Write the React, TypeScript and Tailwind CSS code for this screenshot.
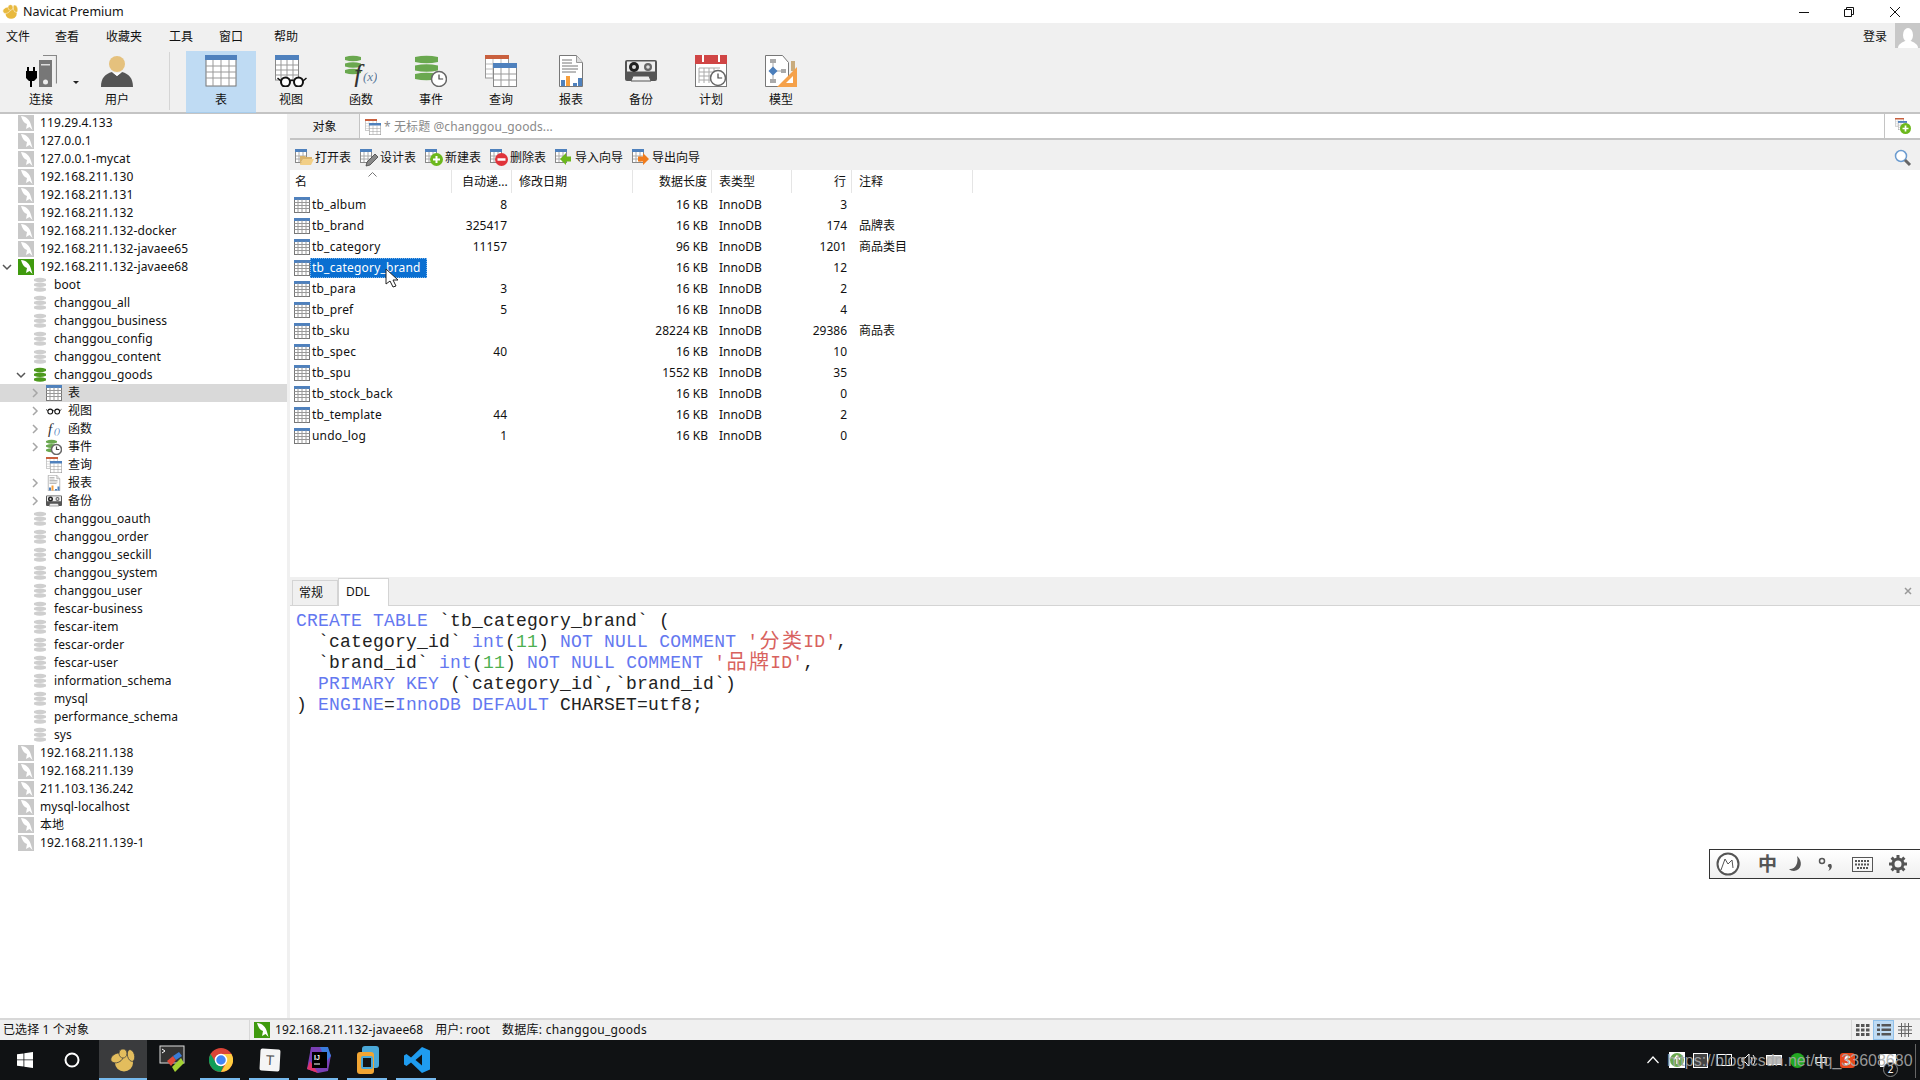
import React from "react";

const keyword = "text-[#6478f0]";
const str = "text-[#d8625e]";
const num = "text-[#4caf50]";

function GridIcon({ size = 16 }: { size?: number }) {
  const big = size > 20;
  return (
    <svg width={size} height={size} viewBox="0 0 32 32" className="shrink-0">
      <rect x="1" y="1" width="30" height="30" fill="#fff" stroke="#777" strokeWidth={big ? 1 : 2} />
      <rect x="0" y="0" width="32" height={big ? 5 : 6} fill="#4f81bd" />
      {[11, 17, 23].map((y) => (
        <path key={y} d={`M1 ${y}H31`} stroke="#999" strokeWidth={big ? 1 : 2} />
      ))}
      {[8, 16, 24].map((x) => (
        <path key={x} d={`M${x} 5V31`} stroke="#999" strokeWidth={big ? 1 : 2} />
      ))}
    </svg>
  );
}

function Glasses({ w = 30, h = 12 }: { w?: number; h?: number }) {
  return (
    <svg width={w} height={h} viewBox="0 0 30 12" className="shrink-0">
      <circle cx="8" cy="7" r="4.5" fill="#fff" stroke="#111" strokeWidth="2" />
      <circle cx="21" cy="7" r="4.5" fill="#fff" stroke="#111" strokeWidth="2" />
      <path d="M12.5 6q2-1.5 4 0M3.5 6 0 3M25.500 6 29 3" fill="none" stroke="#111" strokeWidth="1.500" />
    </svg>
  );
}

function Clock({ cx, cy, r }: { cx: number; cy: number; r: number }) {
  return (
    <g>
      <circle cx={cx} cy={cy} r={r} fill="#fff" stroke="#666" strokeWidth="1.500" />
      <path d={`M${cx} ${cy - r * 0.6}V${cy}H${cx + r * 0.55}`} fill="none" stroke="#444" strokeWidth="1.200" />
    </g>
  );
}

function Cylinder({ x, y, w, band, gap, n, fill }: { x: number; y: number; w: number; band: number; gap: number; n: number; fill: string }) {
  return (
    <g>
      {Array.from({ length: n }).map((_, i) => {
        const t = y + i * (band + gap);
        return (
          <path
            key={i}
            d={`M${x} ${t + 1}Q${x + w / 2} ${t - 1.500} ${x + w} ${t + 1}V${t + band - 1}Q${x + w / 2} ${t + band + 1.500} ${x} ${t + band - 1}Z`}
            fill={fill}
          />
        );
      })}
    </g>
  );
}

function NavicatLogo({ w, h, body = "#e3bd5d", gap }: { w: number; h: number; body?: string; gap: string }) {
  return (
    <svg width={w} height={h} viewBox="0 0 26 24">
      <ellipse cx="14" cy="15" rx="9" ry="8.500" fill={body} />
      <ellipse cx="7" cy="10" rx="6.500" ry="4.500" transform="rotate(-25 7 10)" fill={body} stroke={gap} strokeWidth=".7" />
      <ellipse cx="13" cy="5.500" rx="4" ry="4.500" fill={body} stroke={gap} strokeWidth=".7" />
      <ellipse cx="21" cy="7.500" rx="3.500" ry="6" transform="rotate(-15 21 7.500)" fill={body} stroke={gap} strokeWidth=".7" />
    </svg>
  );
}

function ConnBig() {
  return (
    <svg width="32" height="32" viewBox="0 0 32 32">
      <path d="M14 5h13v27H14z" fill="#777" />
      <path d="M18 .500h13.500v28" fill="none" stroke="#888" strokeWidth="1.200" />
      <path d="M16 9h9v1.500h-9z" fill="#ddd" />
      <circle cx="20.500" cy="27" r="2.500" fill="#eee" />
      <path d="M2 12h2v4h4v-4h2v4h2v7l-3 3H7v6H5v-6H4l-3-3v-7h1z" fill="#000" />
    </svg>
  );
}

function UserBig() {
  return (
    <svg width="32" height="32" viewBox="0 0 32 32">
      <circle cx="16" cy="9" r="8" fill="#e5c17d" />
      <path d="M0 32c0-9 4-13 11-15l5 4 5-4c7 2 11 6 11 15z" fill="#555" />
      <path d="M11 17l5 4 5-4-5 1.500z" fill="#fff" />
    </svg>
  );
}

function ViewBig() {
  return (
    <div className="relative w-[32px] h-[32px]">
      <svg width="32" height="32" viewBox="0 0 32 32">
        <rect x="0.500" y="1" width="23" height="24" fill="#fff" stroke="#888" />
        <rect x="0" y="0" width="24" height="5" fill="#4f81bd" />
        {[10, 15, 20].map((y) => (
          <path key={y} d={`M1 ${y}H23`} stroke="#999" />
        ))}
        {[6, 12, 18].map((x) => (
          <path key={x} d={`M${x} 5V25`} stroke="#999" />
        ))}
      </svg>
      <div className="absolute left-[2px] top-[20px]">
        <Glasses w={31} h={12} />
      </div>
    </div>
  );
}

function FuncBig() {
  return (
    <svg width="32" height="32" viewBox="0 0 32 32">
      <Cylinder x={0} y={1} w={16} band={5} gap={1.500} n={3} fill="#6aa84f" />
      <text x="9" y="28" fontFamily="Liberation Serif" fontStyle="italic" fontSize="27" fill="#333">f</text>
      <text x="18" y="26" fontFamily="Liberation Serif" fontStyle="italic" fontSize="13" fill="#5a7a9a">(x)</text>
    </svg>
  );
}

function EventBig() {
  return (
    <svg width="32" height="32" viewBox="0 0 32 32">
      <Cylinder x={0} y={1} w={23} band={7} gap={1.500} n={3} fill="#6aa84f" />
      <Clock cx={24} cy={24} r={7.500} />
    </svg>
  );
}

function QueryBig({ size = 32 }: { size?: number }) {
  return (
    <svg width={size} height={size} viewBox="0 0 32 32" className="shrink-0">
      <rect x="0.500" y="1" width="23" height="22" fill="#fff" stroke="#999" />
      <rect x="0" y="0" width="24" height="4" fill="#c9603e" />
      {[9, 14, 19].map((y) => (
        <path key={y} d={`M1 ${y}H23`} stroke="#bbb" />
      ))}
      <path d="M8 4V23M16 4V23" stroke="#bbb" />
      <rect x="8.500" y="9" width="23" height="22.500" fill="#fff" stroke="#888" />
      <rect x="8" y="8" width="24" height="5" fill="#4f81bd" />
      {[19, 25].map((y) => (
        <path key={y} d={`M9 ${y}H31`} stroke="#999" />
      ))}
      <path d="M16 13V31M24 13V31" stroke="#999" />
    </svg>
  );
}

function ReportBig({ size = 32 }: { size?: number }) {
  return (
    <svg width={size} height={size} viewBox="0 0 32 32" className="shrink-0">
      <path d="M4.500.500h17l6 7v24h-23z" fill="#fff" stroke="#777" />
      <path d="M21.500.500v7h6" fill="#ddd" stroke="#999" />
      <path d="M7 5h10M7 8h10M7 11h16M7 14h16M7 17h14" stroke="#777" />
      <rect x="6" y="25" width="4" height="6" fill="#4f81bd" />
      <rect x="11" y="21" width="4" height="10" fill="#f79f3c" />
      <rect x="18" y="28" width="4" height="3" fill="#4f81bd" />
      <rect x="23" y="23" width="4" height="8" fill="#4f81bd" />
    </svg>
  );
}

function BackupBig({ size = 32 }: { size?: number }) {
  return (
    <svg width={size} height={size} viewBox="0 0 32 32" className="shrink-0">
      <rect x="0" y="5" width="32" height="21" rx="2" fill="#555" />
      <rect x="2" y="6.500" width="28" height="10" fill="#eee" />
      <circle cx="9" cy="12" r="5" fill="#222" />
      <circle cx="9" cy="12" r="2" fill="#ddd" />
      <circle cx="23" cy="12" r="4" fill="#666" />
      <circle cx="23" cy="12" r="1.800" fill="#ddd" />
      <path d="M6 26l2-5h16l2 5z" fill="#eee" stroke="#555" />
    </svg>
  );
}

function PlanBig() {
  return (
    <svg width="32" height="32" viewBox="0 0 32 32">
      <rect x="0.500" y="0.500" width="31" height="31" fill="#fff" stroke="#777" />
      <rect x="0" y="0" width="32" height="9" fill="#d04545" />
      <path d="M8 0v7M24 0v7" stroke="#fff" strokeWidth="2" />
      {[13, 17, 21, 25].map((y) => (
        <path key={y} d={`M4 ${y}H25`} stroke="#aaa" />
      ))}
      {[4, 9, 14, 19].map((x) => (
        <path key={x} d={`M${x} 13V28`} stroke="#aaa" />
      ))}
      <Clock cx={23} cy={23} r={7.500} />
    </svg>
  );
}

function ModelBig() {
  return (
    <svg width="32" height="32" viewBox="0 0 32 32">
      <path d="M.500.500h17l6 7v24h-23z" fill="#fff" stroke="#777" />
      <rect x="5" y="4" width="6" height="4" fill="#aaa" />
      <rect x="5" y="24" width="6" height="4" fill="#aaa" />
      <rect x="16" y="14" width="5" height="4" fill="#aaa" />
      <path d="M8 8v16M8 16h9" stroke="#aaa" />
      <path d="M8 11.500l4.500 4.500L8 20.500 3.500 16z" fill="#4a7ebb" />
      <rect x="26" y="6" width="4" height="10" fill="#c9ab7c" />
      <path d="M32 12v20H12z" fill="#f5a14a" />
      <path d="M28 21v7h-7z" fill="#fff" />
    </svg>
  );
}

function Dolphin({ active }: { active?: boolean }) {
  return (
    <svg width="16" height="16" viewBox="0 0 16 16" className="shrink-0">
      <rect width="16" height="16" fill={active ? "#3f9a0e" : "#c8c8c8"} />
      <path d="M3 1c5 0 9 4 10 9l1.500 5-3-3-3.500 2 1-5C6 8 4 5 3 1z" fill="#fff" />
    </svg>
  );
}

function DbIcon({ active }: { active?: boolean }) {
  return (
    <svg width="16" height="16" viewBox="0 0 16 16" className="shrink-0">
      <Cylinder x={2} y={1} w={12} band={4} gap={0.800} n={3} fill={active ? "#4e9a1e" : "#cfcfcf"} />
    </svg>
  );
}

function Chevron({ open }: { open?: boolean }) {
  return (
    <svg width="14" height="14" viewBox="0 0 14 14" className="shrink-0">
      {open ? (
        <path d="M3 5l4 4 4-4" fill="none" stroke="#555" strokeWidth="1.500" />
      ) : (
        <path d="M5 3l4 4-4 4" fill="none" stroke="#a6a6a6" strokeWidth="1.500" />
      )}
    </svg>
  );
}

type TreeKind = "conn" | "db" | "table" | "view" | "func" | "event" | "query" | "report" | "backup";
type TreeRow = { label: string; kind: TreeKind; active?: boolean; open?: boolean; closed?: boolean; selected?: boolean };

const conn = (label: string): TreeRow => ({ label, kind: "conn" });
const db = (label: string): TreeRow => ({ label, kind: "db" });

const treeRows: TreeRow[] = [
  conn("119.29.4.133"),
  conn("127.0.0.1"),
  conn("127.0.0.1-mycat"),
  conn("192.168.211.130"),
  conn("192.168.211.131"),
  conn("192.168.211.132"),
  conn("192.168.211.132-docker"),
  conn("192.168.211.132-javaee65"),
  { label: "192.168.211.132-javaee68", kind: "conn", active: true, open: true },
  db("boot"),
  db("changgou_all"),
  db("changgou_business"),
  db("changgou_config"),
  db("changgou_content"),
  { label: "changgou_goods", kind: "db", active: true, open: true },
  { label: "表", kind: "table", closed: true, selected: true },
  { label: "视图", kind: "view", closed: true },
  { label: "函数", kind: "func", closed: true },
  { label: "事件", kind: "event", closed: true },
  { label: "查询", kind: "query" },
  { label: "报表", kind: "report", closed: true },
  { label: "备份", kind: "backup", closed: true },
  db("changgou_oauth"),
  db("changgou_order"),
  db("changgou_seckill"),
  db("changgou_system"),
  db("changgou_user"),
  db("fescar-business"),
  db("fescar-item"),
  db("fescar-order"),
  db("fescar-user"),
  db("information_schema"),
  db("mysql"),
  db("performance_schema"),
  db("sys"),
  conn("192.168.211.138"),
  conn("192.168.211.139"),
  conn("211.103.136.242"),
  conn("mysql-localhost"),
  conn("本地"),
  conn("192.168.211.139-1"),
];

function TreeIcon({ row }: { row: TreeRow }) {
  switch (row.kind) {
    case "conn":
      return <Dolphin active={row.active} />;
    case "db":
      return <DbIcon active={row.active} />;
    case "table":
      return <GridIcon size={16} />;
    case "view":
      return (
        <div className="w-[16px] flex justify-center">
          <Glasses w={16} h={8} />
        </div>
      );
    case "func":
      return (
        <svg width="16" height="16" viewBox="0 0 16 16" className="shrink-0">
          <text x="2" y="13" fontFamily="Liberation Serif" fontStyle="italic" fontSize="15" fill="#333">f</text>
          <text x="8" y="13" fontFamily="Liberation Serif" fontStyle="italic" fontSize="9" fill="#4f81bd">()</text>
        </svg>
      );
    case "event":
      return (
        <svg width="16" height="16" viewBox="0 0 16 16" className="shrink-0">
          <Cylinder x={0} y={1} w={11} band={3.500} gap={0.800} n={3} fill="#6aa84f" />
          <Clock cx={10.500} cy={10.500} r={5} />
        </svg>
      );
    case "query":
      return <QueryBig size={16} />;
    case "report":
      return <ReportBig size={16} />;
    case "backup":
      return <BackupBig size={16} />;
  }
}

function Tree() {
  return (
    <aside className="w-[287px] shrink-0 bg-white tracking-[0.1px]">
      {treeRows.map((row, i) => {
        const depth = row.kind === "conn" ? "pl-0" : row.kind === "db" ? "pl-[14px]" : "pl-[28px]";
        return (
          <div key={i} className={`flex items-center h-[18px] ${depth} ${row.selected ? "bg-[#d9d9d9]" : ""}`}>
            <div className="w-[18px] shrink-0">
              {row.open ? <Chevron open /> : row.closed ? <Chevron /> : null}
            </div>
            <TreeIcon row={row} />
            <span className="ml-[6px] text-[#111] whitespace-nowrap">{row.label}</span>
          </div>
        );
      })}
    </aside>
  );
}

const menuItems = [
  { label: "文件", cls: "ml-[6px]" },
  { label: "查看", cls: "ml-[25px]" },
  { label: "收藏夹", cls: "ml-[27px]" },
  { label: "工具", cls: "ml-[27px]" },
  { label: "窗口", cls: "ml-[26px]" },
  { label: "帮助", cls: "ml-[31px]" },
];

const toolItems = [
  { label: "表", icon: <GridIcon size={32} />, active: true },
  { label: "视图", icon: <ViewBig /> },
  { label: "函数", icon: <FuncBig /> },
  { label: "事件", icon: <EventBig /> },
  { label: "查询", icon: <QueryBig /> },
  { label: "报表", icon: <ReportBig /> },
  { label: "备份", icon: <BackupBig /> },
  { label: "计划", icon: <PlanBig /> },
  { label: "模型", icon: <ModelBig /> },
];

function ToolButton({ label, icon, active }: { label: string; icon: React.ReactNode; active?: boolean }) {
  return (
    <div className={`w-[70px] h-[62px] flex flex-col items-center pt-[4px] ${active ? "bg-[#bfdbf3] border-b border-[#a8cdec]" : ""}`}>
      <div className="h-[32px] w-[32px] flex justify-center">{icon}</div>
      <span className="mt-[3px] text-[#111] leading-[20px]">{label}</span>
    </div>
  );
}

function TopBars() {
  return (
    <>
      <div className="h-[23px] bg-white flex items-center shrink-0">
        <div className="ml-[2px] flex">
          <NavicatLogo w={17} h={15} body="#e8b93e" gap="#fff" />
        </div>
        <span className="ml-[4px] pt-[2px] text-[#111] text-[12.500px]">Navicat Premium</span>
        <div className="ml-auto flex items-center">
          <svg width="10" height="10" viewBox="0 0 10 10"><path d="M0 5.500h10" stroke="#111" /></svg>
          <svg width="10" height="10" viewBox="0 0 10 10" className="ml-[35px]">
            <path d="M.5 2.500h7v7h-7zM2.500 2.500v-2h7v7h-2" fill="none" stroke="#111" />
          </svg>
          <svg width="10" height="10" viewBox="0 0 10 10" className="ml-[36px] mr-[20px]">
            <path d="M0 0l10 10M10 0L0 10" stroke="#111" />
          </svg>
        </div>
      </div>
      <div className="h-[27px] bg-[#f0f0f0] flex items-center shrink-0">
        {menuItems.map((m) => (
          <span key={m.label} className={`${m.cls} text-[#111]`}>{m.label}</span>
        ))}
        <span className="ml-auto text-[#111]">登录</span>
        <div className="ml-[8px] w-[25px] h-[25px] bg-[#c8c8c8] flex items-end justify-center overflow-hidden self-start">
          <svg width="22" height="20" viewBox="0 0 22 20">
            <ellipse cx="11" cy="7" rx="5" ry="7" fill="#fff" />
            <path d="M1 20c0-4 5-6 7-7h6c2 1 7 3 7 7z" fill="#fff" />
          </svg>
        </div>
      </div>
      <div className="h-[64px] bg-[#f0f0f0] border-b-2 border-[#c4c4c4] flex items-start pt-px shrink-0">
        <div className="ml-[6px]">
          <ToolButton label="连接" icon={<ConnBig />} />
        </div>
        <svg width="6" height="4" viewBox="0 0 6 4" className="mt-[30px] -ml-[3px]"><path d="M0 0h6L3 3z" fill="#222" /></svg>
        <div className="ml-[3px]">
          <ToolButton label="用户" icon={<UserBig />} />
        </div>
        <div className="ml-[17px] mt-[1px] mr-[16px] w-px h-[58px] bg-[#d5d5d5]" />
        {toolItems.map((t) => (
          <ToolButton key={t.label} {...t} />
        ))}
      </div>
    </>
  );
}

function SmallTable({ children }: { children: React.ReactNode }) {
  return (
    <div className="relative w-[18px] h-[18px] shrink-0">
      <svg width="12" height="14" viewBox="0 0 12 14" className="absolute left-0 top-0">
        <rect x=".5" y=".5" width="11" height="13" fill="#fff" stroke="#888" />
        <rect width="12" height="3" fill="#4f81bd" />
        <path d="M1 7h10M1 10h10M4 3v10M8 3v10" stroke="#aaa" />
      </svg>
      <div className="absolute left-[5px] top-[4px]">{children}</div>
    </div>
  );
}

const actions = [
  {
    label: "打开表",
    badge: <svg width="14" height="13" viewBox="0 0 14 13"><path d="M0 3h5l1 1h6v2H3L0 12z" fill="#d9b36c" /><path d="M3 6h11l-3 6H0z" fill="#f2cf86" /></svg>,
  },
  {
    label: "设计表",
    badge: <svg width="14" height="14" viewBox="0 0 14 14"><path d="M10 1l3 3-8 8-4 1 1-4z" fill="#888" stroke="#444" strokeWidth=".8" /></svg>,
  },
  {
    label: "新建表",
    badge: <svg width="13" height="13" viewBox="0 0 13 13"><circle cx="6.500" cy="6.500" r="6.500" fill="#6cb81c" /><path d="M6.500 3v7M3 6.500h7" stroke="#fff" strokeWidth="2" /></svg>,
  },
  {
    label: "删除表",
    badge: <svg width="13" height="13" viewBox="0 0 13 13"><circle cx="6.500" cy="6.500" r="6.500" fill="#e0333a" /><path d="M2.500 6.500h8" stroke="#fff" strokeWidth="2.500" /></svg>,
  },
  {
    label: "导入向导",
    badge: <svg width="13" height="12" viewBox="0 0 13 12"><path d="M0 6l6-6v3.500h5v5H6V12z" fill="#6cb81c" /></svg>,
  },
  {
    label: "导出向导",
    badge: <svg width="13" height="12" viewBox="0 0 13 12"><path d="M12 6L6 0v3.500H1v5h5V12z" fill="#f07c1c" /></svg>,
  },
];

function ObjectBars() {
  return (
    <>
      <div className="h-[26px] flex border-b-2 border-[#c4c4c4] shrink-0 bg-white">
        <div className="w-[70px] bg-[#f0f0f0] flex items-center justify-center pt-[1px] border-r border-[#c4c4c4]">
          <span className="text-[#111]">对象</span>
        </div>
        <div className="flex-1 flex items-center pl-[5px] pt-[1px] text-[#8a8a8a] tracking-[0.1px]">
          <QueryBig size={16} />
          <span className="ml-[3px]">* 无标题 @changgou_goods...</span>
        </div>
        <div className="w-[36px] border-l border-[#c4c4c4] flex items-center justify-center">
          <div className="relative w-[16px] h-[16px]">
            <QueryBig size={12} />
            <svg width="11" height="11" viewBox="0 0 13 13" className="absolute left-[5px] top-[5px]">
              <circle cx="6.500" cy="6.500" r="6.500" fill="#6cb81c" />
              <path d="M6.500 3v7M3 6.500h7" stroke="#fff" strokeWidth="2" />
            </svg>
          </div>
        </div>
      </div>
      <div className="h-[30px] flex items-center bg-[#f0f0f0] pl-[5px] pt-[6px] shrink-0">
        {actions.map((a) => (
          <div key={a.label} className="flex items-center mr-[9px]">
            <SmallTable>{a.badge}</SmallTable>
            <span className="ml-[2px] text-[#111]">{a.label}</span>
          </div>
        ))}
        <svg width="18" height="18" viewBox="0 0 18 18" className="ml-auto mr-[8px]">
          <circle cx="7" cy="7" r="5.500" fill="#fff" stroke="#6c9cd0" strokeWidth="1.500" />
          <path d="M11 11l5 5" stroke="#666" strokeWidth="3" />
        </svg>
      </div>
    </>
  );
}

const columns = "grid grid-cols-[162px_60px_121px_79px_80px_60px_121px]";

const tables = [
  { name: "tb_album", auto: "8", size: "16 KB", rows: "3", note: "" },
  { name: "tb_brand", auto: "325417", size: "16 KB", rows: "174", note: "品牌表" },
  { name: "tb_category", auto: "11157", size: "96 KB", rows: "1201", note: "商品类目" },
  { name: "tb_category_brand", auto: "", size: "16 KB", rows: "12", note: "", selected: true },
  { name: "tb_para", auto: "3", size: "16 KB", rows: "2", note: "" },
  { name: "tb_pref", auto: "5", size: "16 KB", rows: "4", note: "" },
  { name: "tb_sku", auto: "", size: "28224 KB", rows: "29386", note: "商品表" },
  { name: "tb_spec", auto: "40", size: "16 KB", rows: "10", note: "" },
  { name: "tb_spu", auto: "", size: "1552 KB", rows: "35", note: "" },
  { name: "tb_stock_back", auto: "", size: "16 KB", rows: "0", note: "" },
  { name: "tb_template", auto: "44", size: "16 KB", rows: "2", note: "" },
  { name: "undo_log", auto: "1", size: "16 KB", rows: "0", note: "" },
];

function TableList() {
  const head = "h-[23px] flex items-center border-r border-[#e5e5e5] text-[#111]";
  return (
    <div className="h-[407px] bg-white shrink-0 relative">
      <div className={`${columns} w-fit`}>
        <div className={`${head} pl-[5px]`}>名</div>
        <div className={`${head} pl-[10px]`}>自动递...</div>
        <div className={`${head} pl-[7px]`}>修改日期</div>
        <div className={`${head} justify-end pr-[4px]`}>数据长度</div>
        <div className={`${head} pl-[7px]`}>表类型</div>
        <div className={`${head} justify-end pr-[5px]`}>行</div>
        <div className={`${head} pl-[7px]`}>注释</div>
      </div>
      <svg width="9" height="5" viewBox="0 0 9 5" className="absolute left-[78px] top-[2px]">
        <path d="M.5 4.500l4-4 4 4" fill="none" stroke="#777" />
      </svg>
      <div className="pt-px">
        {tables.map((t) => (
          <div key={t.name} className={`${columns} w-fit h-[21px] items-center text-[#111]`}>
            <div className="flex items-center pl-[4px]">
              <GridIcon size={16} />
              <span className={`whitespace-nowrap h-[20px] leading-[20px] pl-[2px] tracking-[0.2px] ${t.selected ? "bg-[#0a6fd1] text-white outline-1 outline-dotted outline-[#7fb6ea] -outline-offset-1 pr-[6px]" : ""}`}>
                {t.name}
              </span>
            </div>
            <div className="text-right pr-[5px]">{t.auto}</div>
            <div />
            <div className="text-right pr-[4px]">{t.size}</div>
            <div className="pl-[7px]">InnoDB</div>
            <div className="text-right pr-[5px]">{t.rows}</div>
            <div className="pl-[7px]">{t.note}</div>
          </div>
        ))}
      </div>
    </div>
  );
}

function Cjk({ children }: { children: string }) {
  return <span className="inline-block w-[22.500px] h-[21px] align-top text-center text-[20px] leading-[21px] tracking-normal">{children}</span>;
}

function DetailPane() {
  return (
    <div className="flex-1 flex flex-col min-h-0">
      <div className="h-[29px] bg-[#f0f0f0] border-b border-[#d4d4d4] flex items-end pl-[2px] shrink-0">
        <div className="w-[46px] h-[25px] bg-[#f0f0f0] border border-b-0 border-[#d4d4d4] flex items-center pl-[6px] text-[#111]">常规</div>
        <div className="w-[51px] h-[28px] -mb-px bg-white border border-b-0 border-[#d4d4d4] flex items-center pl-[7px] pb-[2px] text-[#111]">DDL</div>
        <svg width="8" height="8" viewBox="0 0 8 8" className="ml-auto mr-[8px] self-center">
          <path d="M1 1l6 6M7 1L1 7" stroke="#999" strokeWidth="1.500" />
        </svg>
      </div>
      <pre className="flex-1 bg-white pl-[6px] pt-[5px] text-[18px] leading-[21px] tracking-[0.2px] text-[#222] font-['Liberation_Mono','Noto_Sans_CJK_SC',monospace]">
        <span className={keyword}>CREATE TABLE</span>{" `tb_category_brand` (\n  `category_id` "}
        <span className={keyword}>int</span>(<span className={num}>11</span>){" "}
        <span className={keyword}>NOT NULL COMMENT</span>{" "}
        <span className={str}>'<Cjk>分</Cjk><Cjk>类</Cjk>ID'</span>{",\n  `brand_id` "}
        <span className={keyword}>int</span>(<span className={num}>11</span>){" "}
        <span className={keyword}>NOT NULL COMMENT</span>{" "}
        <span className={str}>'<Cjk>品</Cjk><Cjk>牌</Cjk>ID'</span>{",\n  "}
        <span className={keyword}>PRIMARY KEY</span>{" (`category_id`,`brand_id`)\n) "}
        <span className={keyword}>ENGINE</span>=<span className={keyword}>InnoDB DEFAULT</span>{" CHARSET=utf8;"}
      </pre>
    </div>
  );
}

function StatusBar() {
  return (
    <div className="h-[22px] bg-[#f0f0f0] border-t-2 border-[#d8d8d8] flex items-center shrink-0 text-[#111] tracking-[0.1px]">
      <span className="ml-[3px] w-[246px]">已选择 1 个对象</span>
      <div className="w-px h-[20px] bg-[#d8d8d8]" />
      <div className="ml-[4px]"><Dolphin active /></div>
      <span className="ml-[5px]">192.168.211.132-javaee68</span>
      <span className="ml-[12px]">用户: root</span>
      <span className="ml-[12px] tracking-[0.3px]">数据库: changgou_goods</span>
      <div className="ml-auto flex items-center h-[20px]">
        <div className="w-px h-[20px] bg-[#d8d8d8]" />
        <div className="w-[19px] flex justify-center ml-[1px]">
          <svg width="14" height="12" viewBox="0 0 14 12" fill="#555">
            {[0, 5, 10].map((x) => [0, 4.500, 9].map((y) => <rect key={`${x}-${y}`} x={x} y={y} width="3.500" height="3" />))}
          </svg>
        </div>
        <div className="w-[21px] h-[20px] ml-[1px] bg-[#bfdbf3] border border-[#8fc0ea] flex items-center justify-center">
          <svg width="14" height="12" viewBox="0 0 14 12" fill="#555">
            {[0, 4.500, 9].map((y) => (
              <g key={y}>
                <rect x="0" y={y} width="3" height="2.500" />
                <rect x="4.500" y={y} width="9.500" height="2.500" />
              </g>
            ))}
          </svg>
        </div>
        <div className="w-[21px] flex justify-center mr-[5px]">
          <svg width="14" height="14" viewBox="0 0 14 14">
            <path d="M0 3.500h14M0 7h14M0 10.500h14M3.500 0v14M7 0v14M10.500 0v14" stroke="#666" />
          </svg>
        </div>
      </div>
    </div>
  );
}

const taskIcons: { icon: React.ReactNode; cls: string; line?: boolean; active?: boolean }[] = [
  {
    cls: "w-[49px]",
    icon: (
      <svg width="16" height="16" viewBox="0 0 16 16" fill="#fff">
        <path d="M0 2.300 6.500 1.400V7.500H0zM7.300 1.300 16 0v7.500H7.300zM0 8.300h6.500v6.300L0 13.700zM7.300 8.300H16V16l-8.700-1.300z" />
      </svg>
    ),
  },
  {
    cls: "w-[50px] pr-[4px]",
    icon: (
      <svg width="16" height="16" viewBox="0 0 16 16">
        <circle cx="8" cy="8" r="6.500" fill="none" stroke="#fff" strokeWidth="2" />
      </svg>
    ),
  },
  {
    cls: "w-[48px] bg-[#3a3b3d]",
    line: true,
    active: true,
    icon: <NavicatLogo w={26} h={24} gap="#3a3b3d" />,
  },
  {
    cls: "w-[49px]",
    icon: (
      <svg width="26" height="30" viewBox="0 0 26 30">
        <rect x="1" y="1" width="24" height="17" fill="#333" stroke="#ddd" />
        <path d="M3 4l3 2-3 2" stroke="#fff" fill="none" />
        <path d="M8 16l6-5 3 4-5 6z" fill="#e04a3a" />
        <path d="M13 22l9-9 3 5-9 9z" fill="#a4d233" />
        <path d="M14 11l6-4 3 4-6 4z" fill="#3a7bd5" />
      </svg>
    ),
  },
  {
    cls: "w-[49px]",
    line: true,
    icon: (
      <svg width="24" height="24" viewBox="0 0 24 24">
        <circle cx="12" cy="12" r="12" fill="#db4437" />
        <path d="M12 24A12 12 0 0 1 1.600 6L7 15a6 6 0 0 0 7.500 2.500z" fill="#0f9d58" />
        <path d="M22.400 6A12 12 0 0 1 12 24l5.200-9A6 6 0 0 0 12 6z" fill="#ffcd40" />
        <circle cx="12" cy="12" r="5.500" fill="#4285f4" stroke="#fff" strokeWidth="1.500" />
      </svg>
    ),
  },
  {
    cls: "w-[49px]",
    line: true,
    icon: (
      <div className="w-[20px] h-[22px] bg-[#f5f5f5] rounded-[2px] rotate-3 flex items-center justify-center text-[#555] text-[14px] font-['Liberation_Sans',sans-serif]">T</div>
    ),
  },
  {
    cls: "w-[49px]",
    line: true,
    icon: (
      <svg width="24" height="26" viewBox="0 0 24 26">
        <path d="M4 0h10l10 8-3 16-10 2L0 22z" fill="#7a3fb5" />
        <path d="M13 0h8l3 9-5 6z" fill="#3b7de0" />
        <path d="M0 22l3-8 8 12z" fill="#e0336a" />
        <rect x="5" y="5" width="15" height="16" fill="#000" />
        <text x="7" y="13" fontSize="7" fontWeight="700" fill="#fff" fontFamily="Liberation Sans">IJ</text>
        <path d="M7 17h6" stroke="#fff" />
      </svg>
    ),
  },
  {
    cls: "w-[49px]",
    line: true,
    icon: (
      <svg width="22" height="28" viewBox="0 0 22 28">
        <rect x="5" y="0" width="17" height="22" rx="3" fill="#4aa8d8" />
        <rect x="0" y="6" width="17" height="22" rx="3" fill="#f2a533" />
        <rect x="5" y="11" width="10" height="11" rx="1" fill="#121416" stroke="#4aa8d8" strokeWidth="2" />
      </svg>
    ),
  },
  {
    cls: "w-[49px]",
    line: true,
    icon: (
      <svg width="26" height="26" viewBox="0 0 26 26">
        <path d="M18 0l8 3.500v19L18 26 7 15.500l-4.500 3.500L0 17.500v-9L2.500 7 7 10.500zM18 7.500 11.500 13 18 18.500z" fill="#1f9cf0" />
      </svg>
    ),
  },
];

function Taskbar() {
  return (
    <div className="h-[40px] bg-[#101214] flex items-stretch shrink-0 relative overflow-hidden">
      {taskIcons.map((t, i) => (
        <div key={i} className={`${t.cls} relative flex items-center justify-center`}>
          {t.icon}
          {t.line ? <div className={`absolute bottom-0 h-[2px] bg-[#76b9ed] ${t.active ? "inset-x-0" : "left-[4px] right-[5px]"}`} /> : null}
        </div>
      ))}
      <div className="ml-auto flex items-center pr-[24px]">
        <svg width="12" height="8" viewBox="0 0 12 8" className="mr-[10px]"><path d="M.5 7 6 1l5.500 6" fill="none" stroke="#fff" strokeWidth="1.200" /></svg>
        <div className="w-[16px] h-[16px] bg-white flex items-center justify-center mr-[8px]">
          <svg width="14" height="14" viewBox="0 0 14 14"><circle cx="7" cy="7" r="7" fill="#6aa84f" /><path d="M7 11V4M4 6.500 7 3l3 3.500" stroke="#fff" fill="none" strokeWidth="1.500" /></svg>
        </div>
        <div className="w-[15px] h-[15px] border border-white mr-[9px] bg-[#444]" />
        <div className="w-[15px] h-[12px] border border-white mr-[9px]" />
        <svg width="16" height="14" viewBox="0 0 16 14" className="mr-[9px]"><path d="M1 5h3l4-4v12l-4-4H1zM10 4q2 3 0 6M12 2q4 5 0 10" fill="none" stroke="#fff" /></svg>
        <div className="w-[16px] h-[10px] border border-white mr-[8px] bg-[#bbb]" />
        <div className="w-[15px] h-[15px] rounded-full bg-[#22a822] mr-[9px]" />
        <span className="text-white text-[14px] mr-[12px]">中</span>
        <div className="w-[15px] h-[15px] bg-[#e8481c] rounded-[3px] text-white text-[12px] leading-[15px] text-center font-bold mr-[25px]">S</div>
        <div className="relative w-[16px] h-[13px] bg-white">
          <div className="absolute left-[3px] top-[8px] w-[15px] h-[15px] rounded-full bg-[#101214] border border-[#888] text-white text-[10px] leading-[13px] text-center">2</div>
        </div>
      </div>
      <div className="absolute right-[4px] top-[4px] bottom-[2px] w-px bg-[#666]" />
      <span className="absolute left-[1667px] top-[9px] text-[16px] text-[#a8a8a8]/90 whitespace-nowrap font-['Liberation_Sans',sans-serif]">https://blog.csdn.net/qq_33608680</span>
    </div>
  );
}

function ImeBar() {
  return (
    <div className="absolute left-[1709px] top-[849px] w-[211px] h-[30px] border border-r-0 border-[#333] bg-gradient-to-b from-white to-[#efefef] flex items-center text-[#555]">
      <svg width="26" height="24" viewBox="0 0 26 24" className="ml-[6px]">
        <circle cx="12" cy="12" r="10.500" fill="#fff" stroke="#555" strokeWidth="2" />
        <path d="M5 18 9 7l3 5 4-4 1 8" fill="none" stroke="#555" />
      </svg>
      <span className="ml-[16px] text-[19px] font-bold leading-none">中</span>
      <svg width="14" height="16" viewBox="0 0 14 16" className="ml-[12px]"><path d="M8 0c6 5 5 14-3 15-2 0-4-1-5-2 6 1 10-6 8-13z" fill="#555" /></svg>
      <svg width="16" height="16" viewBox="0 0 16 16" className="ml-[15px]">
        <circle cx="4" cy="5" r="2.500" fill="none" stroke="#555" strokeWidth="1.500" />
        <path d="M13 8c2 3 0 6-3 7 1-1 2-2 1-4-1 0-2-2 0-3z" fill="#555" />
      </svg>
      <svg width="21" height="15" viewBox="0 0 21 15" className="ml-[18px]">
        <rect x=".5" y=".5" width="20" height="14" fill="none" stroke="#555" />
        <path d="M3 4h15M3 7.500h15M5 11h11" stroke="#555" strokeWidth="2" strokeDasharray="2 1" />
      </svg>
      <svg width="20" height="20" viewBox="0 0 20 20" className="ml-[15px]">
        <circle cx="10" cy="10" r="5" fill="none" stroke="#555" strokeWidth="3" />
        <path d="M10 1v4M10 15v4M1 10h4M15 10h4M3.600 3.600l3 3M13.400 13.400l3 3M16.400 3.600l-3 3M6.600 13.400l-3 3" stroke="#555" strokeWidth="3" />
      </svg>
    </div>
  );
}

export default function App() {
  return (
    <div className="relative w-[1920px] h-[1080px] overflow-hidden flex flex-col bg-white text-[12px] font-['Noto_Sans','Noto_Sans_CJK_SC',sans-serif]">
      <TopBars />
      <div className="flex-1 flex min-h-0">
        <Tree />
        <main className="flex-1 min-w-0 flex flex-col pl-[3px] bg-[#f0f0f0]">
          <ObjectBars />
          <TableList />
          <DetailPane />
        </main>
      </div>
      <StatusBar />
      <Taskbar />
      <ImeBar />
      <svg width="14" height="20" viewBox="0 0 14 20" className="absolute left-[385px] top-[268px]">
        <path d="M1 1v15l4-3 3 6 3-1-3-6h5z" fill="#fff" stroke="#222" />
      </svg>
    </div>
  );
}
